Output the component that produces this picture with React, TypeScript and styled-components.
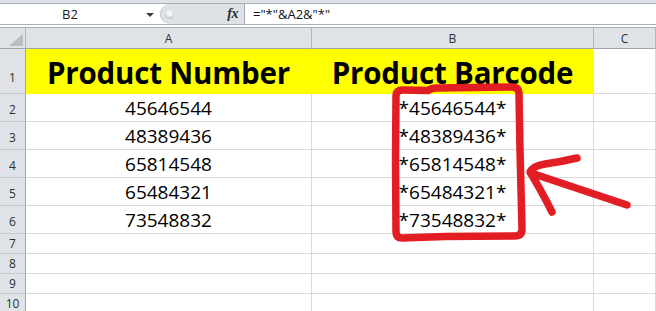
import React from "react";
import styled, { createGlobalStyle } from "styled-components";

const Global = createGlobalStyle`
  html, body { margin: 0; padding: 0; background: #ffffff; overflow: hidden; }
  body { font-family: "Open Sans", "Noto Sans", sans-serif; }
  * { box-sizing: border-box; }
`;

const Page = styled.div`
  position: relative;
  width: 656px;
  height: 311px;
  overflow: hidden;
  background: #ffffff;
`;

const Toolbar = styled.div`
  display: flex;
  flex-direction: column;
  background: #dfe3e8;
`;

const TopStrip = styled.div`
  height: 3px;
  background: #dfe3e8;
`;

const BarRow = styled.div`
  display: flex;
  height: 22px;
  border-top: 1px solid #a7adb5;
  border-bottom: 1px solid #a7adb5;
  background: #ffffff;
`;

const NameBox = styled.div`
  position: relative;
  width: 160px;
  display: flex;
  align-items: center;
  justify-content: center;
  padding-right: 20px;
  font-size: 13px;
  color: #1a1a1a;
  background: #ffffff;
`;

const DropArrow = styled.span`
  position: absolute;
  right: 6px;
  top: 9px;
  width: 0;
  height: 0;
  border-left: 4px solid transparent;
  border-right: 4px solid transparent;
  border-top: 4px solid #3c3c3c;
`;

const Handle = styled.div`
  width: 85px;
  display: flex;
  align-items: center;
  justify-content: space-between;
  padding: 0 6px 0 4px;
  background: #dee2e7;
  border-left: 1px solid #b8bec6;
  border-right: 1px solid #a7adb5;
  border-radius: 11px 0 0 11px;
`;

const Knob = styled.span`
  width: 9px;
  height: 9px;
  border-radius: 50%;
  background: radial-gradient(circle at 50% 35%, #f4f5f7 0 30%, #c3c7cd 70%);
`;

const Fx = styled.span`
  font-family: "Liberation Serif", "DejaVu Serif", serif;
  font-style: italic;
  font-weight: bold;
  font-size: 14px;
  color: #2b2b2b;
  letter-spacing: -0.5px;
`;

const FormulaInput = styled.div`
  flex: 1;
  display: flex;
  align-items: center;
  padding-left: 8px;
  font-size: 13px;
  color: #111111;
  background: #ffffff;
`;

const UnderStrip = styled.div`
  height: 3px;
  background: #ffffff;
  border-bottom: 1px solid #a7adb5;
`;

const Sheet = styled.div`
  display: grid;
  grid-template-columns: 26px 286px 282px 1fr;
  grid-template-rows: 21px 45px repeat(5, 28px) repeat(3, 20px) 20px;
`;

const Corner = styled.div`
  position: relative;
  background: #dfe3e8;
  border-right: 1px solid #b1b6bd;
  border-bottom: 1px solid #9ea5ae;
`;

const CornerMark = styled.svg`
  position: absolute;
  right: 2px;
  bottom: 2px;
`;

const ColHeader = styled.div`
  display: flex;
  align-items: center;
  justify-content: center;
  background: #dfe3e8;
  border-right: 1px solid #b1b6bd;
  border-bottom: 1px solid #9ea5ae;
  font-size: 12px;
  color: #2f2f2f;
`;

const RowHeader = styled.div<{ $pad: number }>`
  display: flex;
  align-items: flex-end;
  justify-content: center;
  padding-bottom: ${(p) => p.$pad}px;
  background: #dfe3e8;
  border-right: 1px solid #9ea5ae;
  border-bottom: 1px solid #c3c8ce;
  font-size: 12px;
  line-height: 16px;
  color: #2f2f2f;
`;

const Cell = styled.div<{ $fill?: boolean; $bold?: boolean }>`
  display: flex;
  align-items: flex-end;
  justify-content: center;
  white-space: nowrap;
  background: ${(p) => (p.$fill ? "#ffff00" : "#ffffff")};
  border-right: 1px solid ${(p) => (p.$fill ? "#ffff00" : "#d9d9d9")};
  border-bottom: 1px solid ${(p) => (p.$fill ? "#ffff00" : "#d9d9d9")};
  font-family: "Open Sans", "Noto Sans", sans-serif;
  font-size: ${(p) => (p.$bold ? "29.5px" : "19px")};
  font-weight: ${(p) => (p.$bold ? 700 : 400)};
  letter-spacing: ${(p) => (p.$bold ? "-0.2px" : "0")};
  color: #000000;
`;

const Annotation = styled.svg`
  position: absolute;
  left: 0;
  top: 0;
  pointer-events: none;
`;

type Row = { num: number; pad: number; a?: string; b?: string; head?: boolean };

const rows: Row[] = [
  { num: 1, pad: 7, a: "Product Number", b: "Product Barcode", head: true },
  { num: 2, pad: 3, a: "45646544", b: "*45646544*" },
  { num: 3, pad: 3, a: "48389436", b: "*48389436*" },
  { num: 4, pad: 3, a: "65814548", b: "*65814548*" },
  { num: 5, pad: 3, a: "65484321", b: "*65484321*" },
  { num: 6, pad: 3, a: "73548832", b: "*73548832*" },
  { num: 7, pad: 1 },
  { num: 8, pad: 1 },
  { num: 9, pad: 1 },
  { num: 10, pad: 1 },
];

export default function App() {
  return (
    <>
      <Global />
      <Page>
        <Toolbar>
          <TopStrip />
          <BarRow>
            <NameBox>
              B2
              <DropArrow />
            </NameBox>
            <Handle>
              <Knob />
              <Fx>fx</Fx>
            </Handle>
            <FormulaInput>="*"&amp;A2&amp;"*"</FormulaInput>
          </BarRow>
          <UnderStrip />
        </Toolbar>
        <Sheet>
          <Corner>
            <CornerMark width="14" height="12" viewBox="0 0 14 12">
              <polygon points="14,0 14,12 0,12" fill="#b9bdc3" />
            </CornerMark>
          </Corner>
          <ColHeader>A</ColHeader>
          <ColHeader>B</ColHeader>
          <ColHeader>C</ColHeader>
          {rows.map((r) => (
            <React.Fragment key={r.num}>
              <RowHeader $pad={r.pad}>{r.num}</RowHeader>
              <Cell $fill={r.head} $bold={r.head}>
                {r.a}
              </Cell>
              <Cell $fill={r.head} $bold={r.head}>
                {r.b}
              </Cell>
              <Cell />
            </React.Fragment>
          ))}
        </Sheet>
        <Annotation width="656" height="311" viewBox="0 0 656 311">
          <g
            fill="none"
            stroke="#e31d24"
            strokeWidth="7.5"
            strokeLinecap="round"
            strokeLinejoin="round"
          >
            <path d="M 396 96 Q 396 90 403 90 L 428 90.5 Q 431 88 437 88 L 512 87 Q 519 87 519 94 L 520 150 L 522 229 Q 522 236 515 236 L 445 236.5 L 402 238 Q 396 238 396 232 L 395.5 160 Z" />
            <path d="M 531 173 L 627 205" />
            <path d="M 577 158 Q 560 162 545 164 Q 533 166 530 172 Q 541 190 552 212" />
          </g>
        </Annotation>
      </Page>
    </>
  );
}
